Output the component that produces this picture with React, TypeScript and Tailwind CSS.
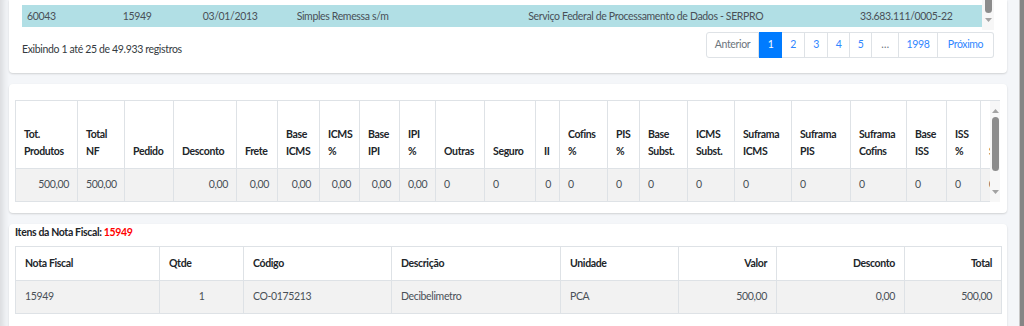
import React from "react";

const topRows = [
  ["60042", "15948", "03/01/2013", "Simples Remessa s/m", "Serviço Federal de Processamento de Dados - SERPRO", "33.683.111/0005-22"],
  ["60043", "15949", "03/01/2013", "Simples Remessa s/m", "Serviço Federal de Processamento de Dados - SERPRO", "33.683.111/0005-22"],
];
const topWidths = [96, 80, 94, 232, 332, 127];

// totals table: [header lines, width, value, align]
const totals: [string[], number, string, string][] = [
  [["Tot.", "Produtos"], 62, "500,00", "text-right"],
  [["Total", "NF"], 47, "500,00", "text-left"],
  [["Pedido"], 49, "", "text-left"],
  [["Desconto"], 63, "0,00", "text-right"],
  [["Frete"], 41, "0,00", "text-right"],
  [["Base", "ICMS"], 42, "0,00", "text-right"],
  [["ICMS", "%"], 40, "0,00", "text-right"],
  [["Base", "IPI"], 40, "0,00", "text-right"],
  [["IPI", "%"], 36, "0,00", "text-right"],
  [["Outras"], 49, "0", "text-left"],
  [["Seguro"], 51, "0", "text-left"],
  [["II"], 24, "0", "text-right"],
  [["Cofins", "%"], 48, "0", "text-left"],
  [["PIS", "%"], 32, "0", "text-left"],
  [["Base", "Subst."], 48, "0", "text-left"],
  [["ICMS", "Subst."], 47, "0", "text-left"],
  [["Suframa", "ICMS"], 57, "0", "text-left"],
  [["Suframa", "PIS"], 59, "0", "text-left"],
  [["Suframa", "Cofins"], 56, "0", "text-left"],
  [["Base", "ISS"], 40, "0", "text-left"],
  [["ISS", "%"], 34, "0", "text-left"],
  [["Serviços"], 70, "0", "text-left"],
];

const items: [string, number, string, string][] = [
  ["Nota Fiscal", 144, "15949", "text-left"],
  ["Qtde", 84, "1", "text-center"],
  ["Código", 148, "CO-0175213", "text-left"],
  ["Descrição", 169, "Decibelimetro", "text-left"],
  ["Unidade", 118, "PCA", "text-left"],
  ["Valor", 98, "500,00", "text-right"],
  ["Desconto", 128, "0,00", "text-right"],
  ["Total", 97, "500,00", "text-right"],
];

const pages: [string, string][] = [
  ["1", "w-[23px]"],
  ["2", "w-[23px]"],
  ["3", "w-[23px]"],
  ["4", "w-[22px]"],
  ["5", "w-[22px]"],
  ["…", "w-[27px]"],
  ["1998", "w-[39px]"],
];

function Arrow({ up }: { up?: boolean }) {
  return (
    <svg width="7" height="4" viewBox="0 0 7 4" className="fill-[#a3a3a3]">
      {up ? <path d="M0 4 L3.5 0 L7 4 Z" /> : <path d="M0 0 L3.5 4 L7 0 Z" />}
    </svg>
  );
}

export default function App() {
  return (
    <div className="flex h-[326px] w-[1024px] overflow-hidden bg-[#f4f6f9] font-['Lato',sans-serif] text-[10.5px] tracking-[-0.35px] text-[#212529]">
      <div className="min-w-0 flex-1 pl-[9px] pr-[12px] shadow-[inset_9px_0_7px_-6px_rgba(0,0,0,0.12)]">
        {/* Notas list (scrolled) */}
        <div className="h-[73px] rounded-b-[4px] bg-white px-[13px] shadow-[0_1px_2px_rgba(0,0,0,0.15)]">
          <div className="flex h-[30px] overflow-hidden">
            <div className="min-w-0 flex-1 overflow-hidden">
              <table className="-mt-[17px] table-fixed border-collapse text-[#495057]">
                <colgroup>
                  {topWidths.map((w, i) => (
                    <col key={i} style={{ width: w }} />
                  ))}
                </colgroup>
                <tbody>
                  {topRows.map((r, ri) => (
                    <tr key={ri} className={ri === 1 ? "bg-[#b1dfe5]" : "bg-white"}>
                      {r.map((c, ci) => (
                        <td key={ci} className="h-[22px] whitespace-nowrap px-[5px] leading-[22px]">
                          {c}
                        </td>
                      ))}
                    </tr>
                  ))}
                </tbody>
              </table>
            </div>
            <div className="flex w-[12px] flex-col items-center bg-[#f7f7f7]">
              <div className="h-[13px] w-[7px] rounded-b-[4px] bg-[#8c8c8c]" />
              <div className="mt-[5px]">
                <Arrow />
              </div>
            </div>
          </div>
          <div className="flex items-start justify-between pt-[2px]">
            <div className="pt-[10px] text-[#343a40]">Exibindo 1 até 25 de 49.933 registros</div>
            <div className="flex h-[26px]">
              <div className="flex w-[53px] items-center justify-center rounded-l-[3px] border border-[#dee2e6] text-[#6c757d]">
                Anterior
              </div>
              {pages.map(([p, w]) => (
                <div
                  key={p}
                  className={
                    p === "1"
                      ? `flex items-center justify-center border border-[#007bff] bg-[#007bff] text-white ${w}`
                      : p === "…"
                      ? `flex items-center justify-center border border-l-0 border-[#dee2e6] text-[#6c757d] ${w}`
                      : `flex items-center justify-center border border-l-0 border-[#dee2e6] text-[#2f86ff] ${w}`
                  }
                >
                  {p}
                </div>
              ))}
              <div className="flex w-[56px] items-center justify-center rounded-r-[3px] border border-l-0 border-[#dee2e6] text-[#2f86ff]">
                Próximo
              </div>
            </div>
          </div>
        </div>

        {/* Totais da nota */}
        <div className="mt-[11px] h-[129px] rounded-[4px] bg-white pb-[11px] pl-[6px] pr-[7px] pt-[16px] shadow-[0_1px_2px_rgba(0,0,0,0.15)]">
          <div className="flex h-[102px] border-t border-[#dee2e6]">
            <div className="min-w-0 flex-1 overflow-hidden">
              <table className="w-[1035px] table-fixed border-collapse">
                <colgroup>
                  {totals.map((t, i) => (
                    <col key={i} style={{ width: t[1] }} />
                  ))}
                </colgroup>
                <thead>
                  <tr>
                    {totals.map((t, i) => (
                      <th
                        key={i}
                        className="h-[67px] overflow-hidden whitespace-nowrap border border-t-0 border-[#dee2e6] px-[8px] pb-[8px] text-left align-bottom font-bold leading-[17px]"
                      >
                        {t[0].map((l) => (
                          <div key={l}>{l}</div>
                        ))}
                      </th>
                    ))}
                  </tr>
                </thead>
                <tbody>
                  <tr className="bg-[#f2f2f2] text-[#495057]">
                    {totals.map((t, i) => (
                      <td key={i} className={`h-[33px] whitespace-nowrap border border-[#dee2e6] px-[8px] ${t[3]}`}>
                        {t[2]}
                      </td>
                    ))}
                  </tr>
                </tbody>
              </table>
            </div>
            <div className="flex w-[10px] flex-col items-center bg-[#f7f7f7] pt-[8px]">
              <Arrow up />
              <div className="mt-[4px] h-[54px] w-[7px] rounded-[4px] bg-[#8c8c8c]" />
              <div className="mt-[19px]">
                <Arrow />
              </div>
            </div>
          </div>
        </div>

        {/* Itens da nota */}
        <div className="mt-[11px] rounded-t-[4px] bg-white px-[6px] pb-[20px] shadow-[0_1px_2px_rgba(0,0,0,0.15)]">
          <div className="mb-[6px] h-[16px] font-bold leading-[16px]">
            Itens da Nota Fiscal: <span className="text-[#ff0000]">15949</span>
          </div>
          <table className="w-full table-fixed border-collapse">
            <colgroup>
              {items.map((c, i) => (
                <col key={i} style={{ width: c[1] }} />
              ))}
            </colgroup>
            <thead>
              <tr>
                {items.map((c, i) => (
                  <th
                    key={i}
                    className={`h-[34px] border border-[#dee2e6] px-[9px] font-bold ${c[3] === "text-right" ? "text-right" : "text-left"}`}
                  >
                    {c[0]}
                  </th>
                ))}
              </tr>
            </thead>
            <tbody>
              <tr className="bg-[#f2f2f2] text-[#495057]">
                {items.map((c, i) => (
                  <td key={i} className={`h-[33px] border border-[#dee2e6] px-[9px] ${c[3]}`}>
                    {c[2]}
                  </td>
                ))}
              </tr>
            </tbody>
          </table>
        </div>
      </div>
      <div className="w-[5px] border-l border-[#c8c8c8] bg-[#858585]" />
    </div>
  );
}
